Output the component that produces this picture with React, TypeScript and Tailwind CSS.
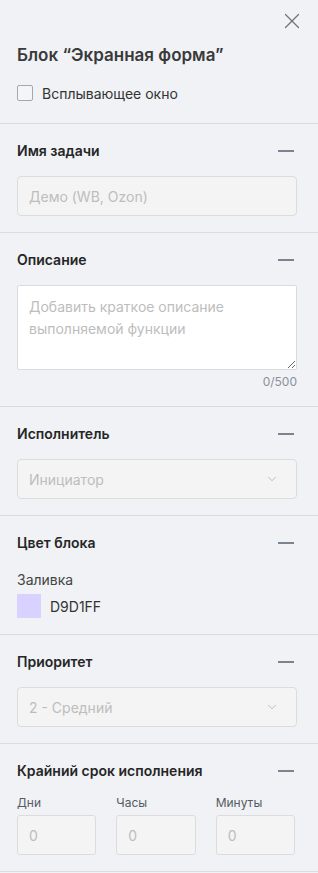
import { X, ChevronDown } from 'lucide-react';

type SectionProps = {
  title: string;
  children: React.ReactNode;
};

function Section({ title, children }: SectionProps) {
  return (
    <div className="border-t border-[#d8dbe0] pl-[17px] pr-[21px] pt-[17px] pb-[16px]">
      <div className="flex items-center justify-between h-5">
        <h3 className="text-[14px] leading-5 font-semibold text-[#262626]">{title}</h3>
        <div className="w-4 h-[1.5px] bg-[#7c8391] mr-[3px]" />
      </div>
      {children}
    </div>
  );
}

function SelectBox({ value }: { value: string }) {
  return (
    <div className="mt-[15px] h-10 rounded-[4px] border border-[#dcdcdc] bg-[#f4f4f4] pl-[11px] pr-[17px] flex items-center justify-between">
      <span className="text-[14px] text-[#bdbdbd]">{value}</span>
      <ChevronDown size={14} strokeWidth={1.5} className="text-[#b5b5b5]" />
    </div>
  );
}

export default function App() {
  const timeFields = ['Дни', 'Часы', 'Минуты'];

  return (
    <div className="min-h-screen w-full bg-[#f0f2f5] font-['Inter',sans-serif]">
      {/* Header */}
      <div className="pl-[17px] pr-[21px] pt-[8px] pb-[22px]">
        <div className="flex justify-end h-[26px]">
          <button className="text-[#6e737c] -mr-[8px]">
            <X size={26} strokeWidth={1.15} />
          </button>
        </div>
        <h2 className="mt-[9px] text-[17px] leading-6 font-semibold text-[#3a3a3a]">
          Блок “Экранная форма”
        </h2>
        <label className="mt-[18px] flex items-center gap-[9px] h-4">
          <span className="w-4 h-4 rounded-[2px] border border-[#a3a8b0] bg-[#f4f5f7]" />
          <span className="text-[14px] text-[#333333]">Всплывающее окно</span>
        </label>
      </div>

      <Section title="Имя задачи">
        <div className="mt-[15px] h-10 rounded-[4px] border border-[#dcdcdc] bg-[#f4f4f4] pl-[11px] flex items-center">
          <span className="text-[14px] text-[#bdbdbd]">Демо (WB, Ozon)</span>
        </div>
      </Section>

      <Section title="Описание">
        <textarea
          className="mt-[15px] block w-full h-[85px] rounded-[2px] border border-[#d9dbdf] bg-white px-[11px] py-[10px] text-[14px] leading-[22px] text-[#333] placeholder:text-[#bdbdbd] outline-none"
          placeholder="Добавить краткое описание выполняемой функции"
        />
        <div className="mt-[4px] text-right text-[12px] leading-4 text-[#8a919c]">0/500</div>
      </Section>

      <Section title="Исполнитель">
        <SelectBox value="Инициатор" />
      </Section>

      <Section title="Цвет блока">
        <div className="mt-[17px] text-[14px] leading-5 text-[#444444]">Заливка</div>
        <div className="mt-1 flex items-center gap-[9px]">
          <div className="w-6 h-6 bg-[#d9d1ff]" />
          <span className="text-[14px] text-[#333333]">D9D1FF</span>
        </div>
      </Section>

      <Section title="Приоритет">
        <SelectBox value="2 - Средний" />
      </Section>

      <Section title="Крайний срок исполнения">
        <div className="mt-[14px] grid grid-cols-3 gap-5 pr-[2px]">
          {timeFields.map(f => (
            <div key={f}>
              <div className="text-[12px] leading-4 text-[#555b63]">{f}</div>
              <div className="mt-[4px] h-10 rounded-[3px] border border-[#dcdcdc] bg-[#f4f4f4] pl-[11px] flex items-center">
                <span className="text-[14px] text-[#bdbdbd]">0</span>
              </div>
            </div>
          ))}
        </div>
      </Section>
      <div className="border-t border-[#d8dbe0]" />
    </div>
  );
}
